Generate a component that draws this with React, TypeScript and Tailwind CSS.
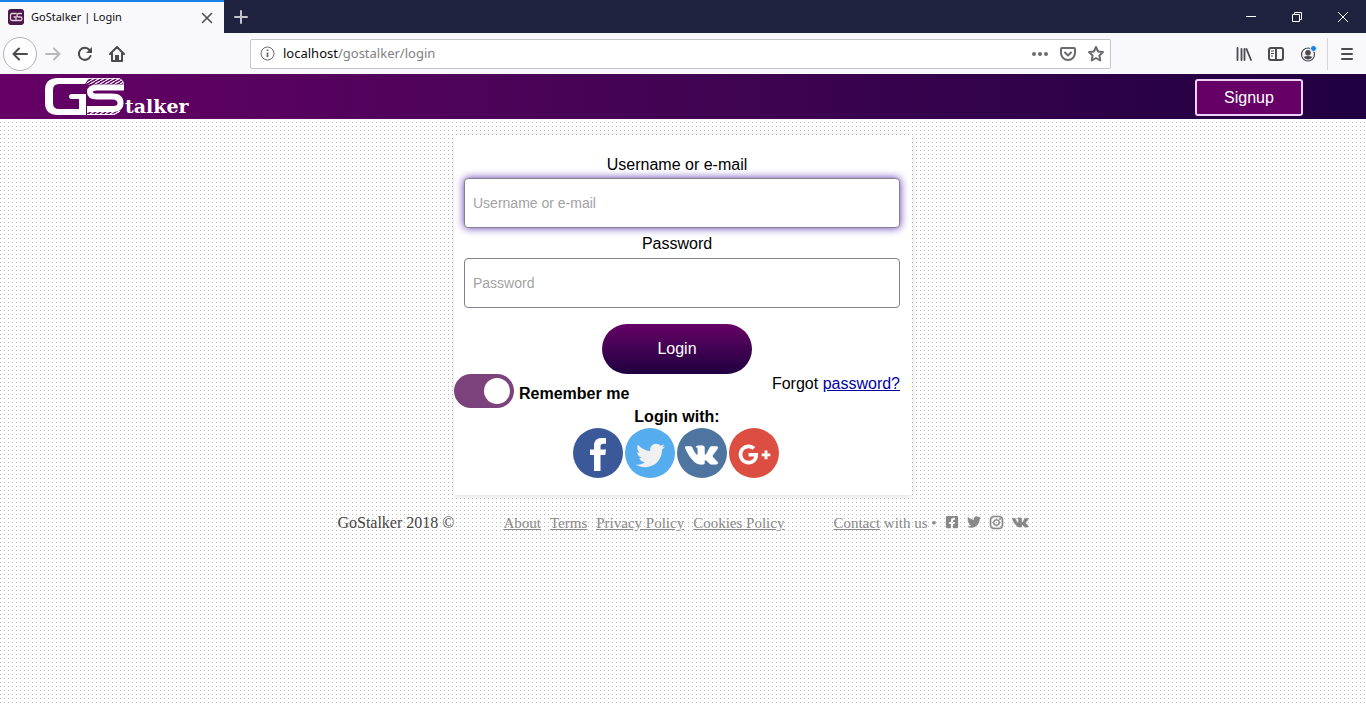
import type { ReactNode } from "react";
import { FaTwitter, FaGooglePlusG, FaFacebookSquare, FaInstagram } from "react-icons/fa";

function Logo() {
  return (
    <a href="#" aria-label="GoStalker" className="flex h-10 items-end text-white">
      <svg viewBox="0 0 80 38" className="mb-0.5 h-[38px] w-20" aria-hidden="true">
        <defs>
          <pattern id="hatch" width="5" height="3" patternUnits="userSpaceOnUse">
            <path d="M0 3L5 0M-5 3L0 0M5 3L10 0" stroke="white" strokeWidth="1.1" />
          </pattern>
        </defs>
        <path d="M44 0H13Q0 0 0 12V25Q0 37 13 37H41V16H27Q24 16 24 18.500T27 21H34V31H14Q8 31 8 25V12Q8 6 14 6H40Z" fill="white" />
        <path d="M79 9.500H52Q45 9.500 45 14T52 18.500H67Q75.500 18.500 75.500 25T67 31H42" fill="none" stroke="white" strokeWidth="6" />
        <path d="M44 0H73Q79 1 79 6.500H41Z" fill="url(#hatch)" />
        <path d="M42 0.500H73Q78 1 78.500 6.500" fill="none" stroke="white" strokeWidth="0.8" />
        <path d="M42 33H76Q73 37 67 37H42Z" fill="url(#hatch)" />
        <path d="M42 36.500H67Q71 36.500 74 33.500" fill="none" stroke="white" />
      </svg>
      <span className="font-['DejaVu_Serif',serif] text-[19px] leading-6 font-bold">talker</span>
    </a>
  );
}

function VkIcon({ className }: { className: string }) {
  return (
    <svg viewBox="2 6 21 12.500" fill="currentColor" className={className} aria-hidden="true">
      <path
        stroke="currentColor"
        strokeWidth="0.4"
        d="M21.547 7h-3.29a.743.743 0 0 0-.655.392s-1.312 2.416-1.734 3.23C14.734 12.813 14 12.126 14 11.11V7.603A1.104 1.104 0 0 0 12.896 6.5h-2.474a1.982 1.982 0 0 0-1.75.813s1.255-.204 1.255 1.49c0 .42.022 1.626.04 2.64a.73.73 0 0 1-1.272.503 21.54 21.54 0 0 1-2.498-4.543.693.693 0 0 0-.63-.403h-2.99a.508.508 0 0 0-.48.685C3.005 10.175 6.918 18 11.38 18h1.878a.742.742 0 0 0 .742-.742v-1.135a.73.73 0 0 1 1.23-.53l2.247 2.112a1.09 1.09 0 0 0 .746.295h2.953c1.424 0 1.424-.988.647-1.753-.546-.538-2.518-2.617-2.518-2.617a1.02 1.02 0 0 1-.078-1.323c.637-.84 1.68-2.212 2.122-2.8.603-.804 1.697-2.507.197-2.507z"
      />
    </svg>
  );
}

function FacebookIcon() {
  return (
    <svg viewBox="0 0 16 33" fill="currentColor" className="mt-0.5 h-[33px] w-4" aria-hidden="true">
      <path d="M4 33V17H0V11.500H4V8Q4 0 11.500 0H16V5.700H13Q10.500 5.700 10.500 8.200V11.500H16L15.300 17H10.500V33Z" />
    </svg>
  );
}

function ToolButton({ label, children, className = "w-8" }: { label: string; children: ReactNode; className?: string }) {
  return (
    <button type="button" aria-label={label} className={`flex h-8 items-center justify-center text-[#4a4a4f] ${className}`}>
      {children}
    </button>
  );
}

const line = { fill: "none", stroke: "currentColor", strokeWidth: 2, strokeLinecap: "round", strokeLinejoin: "round" } as const;

function BrowserChrome() {
  return (
    <div className="font-['Noto_Sans',sans-serif]">
      <div className="flex h-[33px] bg-[#202340]">
        <div className="flex w-56 items-center border-t-2 border-[#1a82e8] bg-[#f9f9fb] px-2">
          <svg width="17" height="17" viewBox="0 0 17 17" aria-hidden="true">
            <rect width="16" height="16" rx="3" fill="#4b1747" />
            <path d="M8.500 4.500H4Q2.500 4.500 2.500 6V10Q2.500 11.500 4 11.500H8V8H5.500M14 4.500H10.500Q9 4.500 9 6.200T10.500 8H12.500Q14 8 14 9.800T12.500 11.500H8.500" fill="none" stroke="#e5cfe3" strokeWidth="1.3" />
          </svg>
          <span className="ml-1.5 flex-1 text-[11px] whitespace-nowrap text-[#0c0c0d]">GoStalker | Login</span>
          <button type="button" aria-label="Close tab" className="flex w-[18px] justify-center text-[#4a4a4f]">
            <svg width="12" height="12" viewBox="0 0 12 12"><path d="M1.500 1.500L10.500 10.500M10.500 1.500L1.500 10.500" {...line} strokeWidth={1.5} /></svg>
          </button>
        </div>
        <button type="button" aria-label="New tab" className="flex w-[34px] items-center justify-center text-[#c4c4ce]">
          <svg width="14" height="14" viewBox="0 0 14 14"><path d="M7 1V13M1 7H13" {...line} /></svg>
        </button>
        <div className="ml-auto flex text-white">
          <button type="button" aria-label="Minimize" className="flex w-[46px] items-center justify-center">
            <svg width="10" height="10" viewBox="0 0 10 10"><path d="M0 4.500H10" stroke="currentColor" /></svg>
          </button>
          <button type="button" aria-label="Restore" className="flex w-[46px] items-center justify-center">
            <svg width="10" height="10" viewBox="0 0 10 10" fill="none" stroke="currentColor"><path d="M0.500 2.500H7.500V9.500H0.500ZM2.500 2.500V0.500H9.500V7.500H7.500" /></svg>
          </button>
          <button type="button" aria-label="Close window" className="flex w-[46px] items-center justify-center">
            <svg width="10" height="10" viewBox="0 0 10 10"><path d="M0 0L10 10M10 0L0 10" stroke="currentColor" /></svg>
          </button>
        </div>
      </div>
      <div className="flex h-[41px] items-center bg-[#f9f9fb] pl-[3px]">
        <button type="button" aria-label="Back" className="flex h-[34px] w-[34px] items-center justify-center rounded-full border border-[#b1b1b3] bg-white text-[#4a4a4f]">
          <svg width="16" height="16" viewBox="0 0 16 16"><path d="M15 8H1.500M7 2.500L1.500 8L7 13.500" {...line} /></svg>
        </button>
        <ToolButton label="Forward">
          <svg width="16" height="16" viewBox="0 0 16 16" className="text-[#b9b9bc]"><path d="M1 8H14.500M9 2.500L14.500 8L9 13.500" {...line} /></svg>
        </ToolButton>
        <ToolButton label="Reload">
          <svg width="16" height="16" viewBox="0 0 16 16"><path d="M13.500 10A6 6 0 1 1 12.500 4" {...line} /><path d="M15 1V7H9Z" fill="currentColor" /></svg>
        </ToolButton>
        <ToolButton label="Home">
          <svg width="16" height="16" viewBox="0 0 16 16"><path d="M1 8L8 1L15 8M3 7V15H13V7" {...line} /><path d="M6 15V9H10V15Z" fill="currentColor" /></svg>
        </ToolButton>
        <div className="ml-[117px] flex h-[30px] w-[861px] items-center rounded-xs border border-[#c4c4c6] bg-white pr-1.5 pl-[9px]">
          <svg width="15" height="15" viewBox="0 0 15 15" aria-hidden="true" className="text-[#6b6b6f]">
            <circle cx="7.500" cy="7.500" r="6.500" fill="none" stroke="currentColor" />
            <path d="M7.500 6.500V11M7.500 3.500V5" stroke="currentColor" strokeWidth="1.8" />
          </svg>
          <div className="ml-2 flex-1 pt-px text-[13px] text-[#808084]"><span className="text-[#0c0c0d]">localhost</span>/gostalker/login</div>
          <div className="flex gap-3 text-[#6b6b6f]">
            <button type="button" aria-label="Page actions">
              <svg width="16" height="16" viewBox="0 0 16 16" fill="currentColor"><circle cx="2" cy="8" r="2" /><circle cx="8" cy="8" r="2" /><circle cx="14" cy="8" r="2" /></svg>
            </button>
            <button type="button" aria-label="Save to Pocket">
              <svg width="16" height="16" viewBox="0 0 16 16"><path d="M2 2H14Q15 2 15 3V7A7 7 0 0 1 1 7V3Q1 2 2 2ZM5 6.500L8 9.500L11 6.500" {...line} /></svg>
            </button>
            <button type="button" aria-label="Bookmark">
              <svg width="16" height="16" viewBox="0 0 16 16"><path d="M8 1L10.100 5.500L15 6.100L11.400 9.500L12.300 14.500L8 12L3.700 14.500L4.600 9.500L1 6.100L5.900 5.500Z" {...line} /></svg>
            </button>
          </div>
        </div>
        <div className="ml-auto flex">
          <ToolButton label="Library">
            <svg width="16" height="16" viewBox="0 0 16 16"><path d="M1.500 2V14M5.500 3V14M8.500 3V14M10.500 3L15 14" {...line} strokeWidth={1.8} /></svg>
          </ToolButton>
          <ToolButton label="Sidebars">
            <svg width="16" height="16" viewBox="0 0 16 16"><path d="M3 2H13Q15 2 15 4V12Q15 14 13 14H3Q1 14 1 12V4Q1 2 3 2ZM8 2V14" {...line} /><path d="M3 5H6M3 7.500H6M3 10H5" stroke="currentColor" /></svg>
          </ToolButton>
          <ToolButton label="Account">
            <svg width="18" height="18" viewBox="0 0 18 18"><circle cx="9" cy="9.500" r="6.500" fill="none" stroke="currentColor" strokeWidth="1.2" /><circle cx="9" cy="7.800" r="2.800" fill="currentColor" /><path d="M4.500 12Q9 10 13.500 12Q9 17 4.500 12" fill="currentColor" /><circle cx="14.500" cy="3.500" r="3" fill="#1683e8" stroke="#f9f9fb" /></svg>
          </ToolButton>
          <ToolButton label="Menu" className="ml-[3px] w-[39px] border-l border-[#d7d7db]">
            <svg width="14" height="14" viewBox="0 0 14 14"><path d="M2 2H12M2 7H12M2 12H12" {...line} /></svg>
          </ToolButton>
        </div>
      </div>
    </div>
  );
}

const inputClass = "ml-2.5 block h-[50px] w-[calc(100%-10px)] rounded-sm border border-[#85808c] bg-white px-2 text-sm text-black outline-none placeholder:text-[#a3a3a3] placeholder:opacity-100 focus:shadow-[0_0_8px_#5a35b0]";

const providers = [
  { name: "Facebook", icon: <FacebookIcon />, color: "bg-[#3b5998]" },
  { name: "Twitter", icon: <FaTwitter size={29} className="mt-1 text-[#f0f0f0]" />, color: "bg-[#55acee]" },
  { name: "VK", icon: <VkIcon className="mt-1 h-5 w-[34px]" />, color: "bg-[#4d75a0]" },
  { name: "Google Plus", icon: <FaGooglePlusG size={33} className="mt-0.5" />, color: "bg-[#dc4e41]" },
];

function LoginCard() {
  return (
    <form onSubmit={(e) => e.preventDefault()} className="mx-auto mt-4 w-[458px] max-w-full bg-white pt-[18px] pr-3 pb-[17px] text-center shadow-[0_1px_6px_rgba(0,0,0,0.15)]">
      <label htmlFor="user" className="block h-[25px] leading-6">Username or e-mail</label>
      <input id="user" autoFocus placeholder="Username or e-mail" className={inputClass} />
      <label htmlFor="password" className="block h-[30px] leading-8">Password</label>
      <input id="password" type="password" placeholder="Password" className={inputClass} />
      <button type="submit" className="mt-4 h-[50px] w-[150px] rounded-full bg-linear-to-b from-[#660066] to-[#200040] text-white">Login</button>
      <div className="flex h-[34px] justify-between">
        <label className="flex items-center gap-[5px] font-bold">
          <input type="checkbox" defaultChecked className="peer sr-only" />
          <span className="flex h-[34px] w-[60px] items-center rounded-full bg-[#b8b8b8] px-1 peer-checked:justify-end peer-checked:bg-[#7b427b]">
            <span className="h-[26px] w-[26px] rounded-full bg-white" />
          </span>
          <span className="pt-1.5">Remember me</span>
        </label>
        <p className="leading-5">Forgot <a href="#" className="text-[#0000a5] underline">password?</a></p>
      </div>
      <p className="h-5 leading-[18px] font-bold">Login with:</p>
      <div className="flex justify-center gap-0.5 pr-0.5">
        {providers.map((p) => (
          <a key={p.name} href="#" aria-label={p.name} className={`flex h-[50px] w-[50px] items-center justify-center rounded-full text-white ${p.color}`}>{p.icon}</a>
        ))}
      </div>
    </form>
  );
}

function Footer() {
  return (
    <footer className="flex items-center justify-center pt-4 font-['Liberation_Serif',serif] text-[15px] leading-6 text-[#888]">
      <span className="text-base text-[#444]">GoStalker 2018 ©</span>
      <nav className="ml-[49px] flex gap-[9px] underline">
        <a href="#">About</a>
        <a href="#">Terms</a>
        <a href="#">Privacy Policy</a>
        <a href="#">Cookies Policy</a>
      </nav>
      <span className="ml-[49px]"><a href="#" className="underline">Contact</a> with us •</span>
      <div className="ml-2 flex items-center gap-2 pb-0.5">
        <a href="#" aria-label="Facebook"><FaFacebookSquare size={14} /></a>
        <a href="#" aria-label="Twitter"><FaTwitter size={14} /></a>
        <a href="#" aria-label="Instagram"><FaInstagram size={15} stroke="currentColor" strokeWidth={16} /></a>
        <a href="#" aria-label="VK"><VkIcon className="h-[11px] w-[17px]" /></a>
      </div>
    </footer>
  );
}

export default function App() {
  return (
    <div className="flex min-h-screen flex-col bg-white font-['Liberation_Sans',Arial,sans-serif] text-base text-black">
      <BrowserChrome />
      <header className="flex h-[45px] items-center justify-between bg-linear-to-r from-[#660066] to-[#200040] pt-0.5 pr-[63px] pl-[45px]">
        <Logo />
        <a href="#" className="flex h-[37px] w-[108px] items-center justify-center rounded-[3px] border-2 border-[#f0d0f5] bg-[#660066] text-white">Signup</a>
      </header>
      <main className="flex-1 bg-[conic-gradient(at_1px_3px,transparent_50%,#c0c0c0_50%_75%,transparent_75%)] bg-size-[4px_4px]">
        <LoginCard />
        <Footer />
      </main>
    </div>
  );
}
